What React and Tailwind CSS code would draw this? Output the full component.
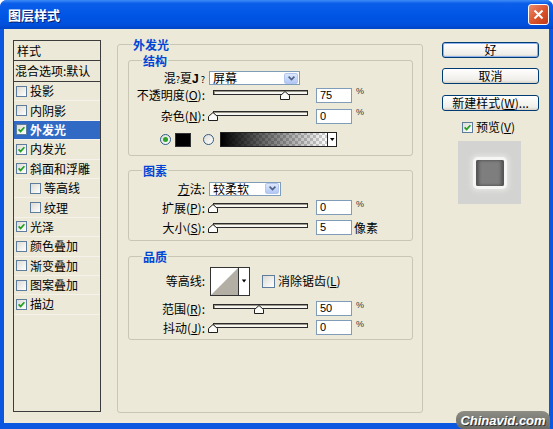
import React from 'react';

const styles = [
  { name: '投影', on: false },
  { name: '内阴影', on: false },
  { name: '外发光', on: true, sel: true },
  { name: '内发光', on: true },
  { name: '斜面和浮雕', on: true },
  { name: '等高线', on: false, sub: true },
  { name: '纹理', on: false, sub: true },
  { name: '光泽', on: true },
  { name: '颜色叠加', on: false },
  { name: '渐变叠加', on: false },
  { name: '图案叠加', on: false },
  { name: '描边', on: true },
];

const Check = ({ checked }) => (
  <span className="flex h-[11px] w-[11px] shrink-0 items-center justify-center border border-[#5e7c9c] bg-[linear-gradient(135deg,#dcdbd4,#ffffff)]">
    {checked && (
      <svg width="7" height="7" viewBox="0 0 7 7">
        <path d="M0.6 3.4 L2.6 5.4 L6.4 1.2" stroke="#21a121" strokeWidth="1.7" fill="none" />
      </svg>
    )}
  </span>
);

const Radio = ({ on }) => (
  <span className="flex h-[11px] w-[11px] shrink-0 items-center justify-center rounded-full border border-[#2f5b86] bg-[linear-gradient(135deg,#dcdbd4,#ffffff)]">
    {on && <span className="h-[5px] w-[5px] rounded-full bg-[#2aa52a]" />}
  </span>
);

const Key = ({ children }) => <span className="underline">{children}</span>;

const Label = ({ children }) => (
  <div className="w-[76px] shrink-0 whitespace-nowrap text-right leading-none">{children}</div>
);

const Slider = ({ value }) => (
  <div className="relative ml-[3px] h-[10px] w-[100px] shrink-0">
    <div className="ml-[5px] h-[5px] w-[95px] border border-[#2b2b2b] bg-[#f6f5f0] shadow-[inset_1px_1px_0_#9a978a]" />
    <svg className="absolute top-[1px]" style={{ left: value * 0.95 }} width="10" height="9" viewBox="0 0 10 9">
      <path d="M0.5 8.5 V4.5 L5 0.5 L9.5 4.5 V8.5 Z" fill="#fbfbf8" stroke="#1e1e1e" />
    </svg>
  </div>
);

const Field = ({ v }) => (
  <div className="ml-[8px] flex h-[15px] w-[36px] shrink-0 items-center border border-[#7f9db9] bg-white pl-[3px] font-['Liberation_Sans',sans-serif] text-[11px] leading-none text-black">
    {v}
  </div>
);

const Pct = () => <span className="ml-[4px] self-start font-['Liberation_Sans',sans-serif] text-[9px] leading-none text-[#333]">%</span>;

const Select = ({ text, wide }) => (
  <div className={`ml-[4px] flex h-[14px] items-center justify-between border border-[#7f9db9] bg-white pl-[3px] pr-[1px] leading-none ${wide ? 'w-[91px]' : 'w-[72px]'}`}>
    <span>{text}</span>
    <span className="flex h-[11px] w-[14px] items-center justify-center rounded-[2px] border border-[#b4c7ee] bg-[linear-gradient(#dde7fd,#b2c7f5)]">
      <svg width="7" height="5" viewBox="0 0 7 5">
        <path d="M0.6 0.6 L3.5 3.6 L6.4 0.6" stroke="#4d6185" strokeWidth="1.6" fill="none" />
      </svg>
    </span>
  </div>
);

const Legend = ({ children, inner }) => (
  <div className={`-mt-[8px] w-fit bg-[#ece9d8] px-[1px] text-[12px] font-bold leading-[15px] text-[#0046d5] ${inner ? 'ml-[13px]' : 'ml-[14px]'}`}>
    {children}
  </div>
);

const Btn = ({ children, focus }) => (
  <div
    className={`flex h-[16px] w-[97px] items-center justify-center rounded-[3px] border border-[#003c74] bg-[linear-gradient(#ffffff,#efeee9_80%,#d8d2c6)] leading-none ${focus ? 'shadow-[inset_0_0_0_1px_#8fb1ee]' : ''}`}
  >
    {children}
  </div>
);

export default function App() {
  return (
    <div className="relative flex h-[429px] w-[553px] flex-col overflow-hidden rounded-t-[7px] bg-[#0b57e0] font-['Noto_Sans_CJK_SC','Noto_Sans',sans-serif] text-[12px] text-black">
      {/* title bar */}
      <div className="flex h-[29px] shrink-0 items-center justify-between bg-[linear-gradient(#3f8cf7,#0a5ee9_12%,#0055e5_55%,#0050dc_85%,#0044c6)]">
        <span className="ml-[8px] text-[13px] font-bold leading-none text-white [text-shadow:1px_1px_0_#0a1e6a]">图层样式</span>
        <div className="mr-[4px] flex h-[21px] w-[21px] items-center justify-center rounded-[3px] border border-white bg-[linear-gradient(135deg,#ec8c6c,#d8522c_55%,#c23a18)]">
          <svg width="11" height="11" viewBox="0 0 11 11">
            <path d="M1.5 1.5 L9.5 9.5 M9.5 1.5 L1.5 9.5" stroke="#fff" strokeWidth="2" />
          </svg>
        </div>
      </div>

      {/* body */}
      <div className="mx-[4px] flex h-[394px] shrink-0 bg-[#ece9d8]">
        {/* style list */}
        <div className="ml-[9px] mt-[11px] h-[372px] w-[88px] shrink-0 border border-[#3c3c3c]">
          <div className="flex h-[20px] items-center border-b border-[#3c3c3c] pl-[3px] leading-none">样式</div>
          <div className="flex h-[21px] items-center whitespace-nowrap border-b border-[#3c3c3c] pl-[1px] leading-none">混合选项:默认</div>
          {styles.map((s) => (
            <div
              key={s.name}
              className={`flex h-[19.4px] items-center gap-[3px] border-b border-[#f4f2ea] leading-none ${s.sub ? 'pl-[16px]' : 'pl-[2px]'} ${s.sel ? 'bg-[#316ac5] font-bold text-white' : ''}`}
            >
              <Check checked={s.on} />
              <span>{s.name}</span>
            </div>
          ))}
        </div>

        {/* settings */}
        <div className="ml-[16px] mt-[15px] h-[369px] w-[306px] shrink-0 rounded-[3px] border border-[#c9c6b6]">
          <Legend>外发光</Legend>

          <div className="ml-[10px] mt-[8px] w-[285px] rounded-[3px] border border-[#c9c6b6] pb-[8px]">
            <Legend inner>结构</Legend>
            <div className="mt-[3px] flex h-[14px] items-center">
              <Label>
                混<span className="text-[9px]">?</span>夏<span className="font-['Liberation_Sans',sans-serif] font-bold">J</span>
                <span className="text-[9px]"> ?</span>
              </Label>
              <Select text="屏幕" wide />
            </div>
            <div className="mt-[2px] flex h-[16px] items-center">
              <Label>不透明度(<Key>O</Key>):</Label>
              <Slider value={76} />
              <Field v="75" />
              <Pct />
            </div>
            <div className="mt-[5px] flex h-[16px] items-center">
              <Label>杂色(<Key>N</Key>):</Label>
              <Slider value={0} />
              <Field v="0" />
              <Pct />
            </div>
            <div className="mt-[8px] flex h-[15px] items-center pl-[31px]">
              <Radio on />
              <span className="ml-[4px] h-[14px] w-[16px] border border-[#333] bg-black" />
              <span className="ml-[12px]">
                <Radio />
              </span>
              <svg className="ml-[6px]" width="117" height="15" viewBox="0 0 117 15">
                <defs>
                  <pattern id="chk" width="6" height="6" patternUnits="userSpaceOnUse">
                    <rect width="6" height="6" fill="#fff" />
                    <rect width="3" height="3" fill="#cfcfcf" />
                    <rect x="3" y="3" width="3" height="3" fill="#cfcfcf" />
                  </pattern>
                  <linearGradient id="fade">
                    <stop offset="0" stopColor="#000" />
                    <stop offset="1" stopColor="#000" stopOpacity="0" />
                  </linearGradient>
                </defs>
                <rect x="0.5" y="0.5" width="107" height="14" fill="url(#chk)" stroke="#222" />
                <rect x="1" y="1" width="106" height="13" fill="url(#fade)" />
                <rect x="107.5" y="0.5" width="9" height="14" fill="#fff" stroke="#222" />
                <path d="M110 6 h4.5 l-2.25 3 z" fill="#000" />
              </svg>
            </div>
          </div>

          <div className="ml-[10px] mt-[14px] w-[285px] rounded-[3px] border border-[#c9c6b6] pb-[5px]">
            <Legend inner>图素</Legend>
            <div className="mt-[4px] flex h-[13px] items-center">
              <Label>
                <Key>方</Key>法:
              </Label>
              <Select text="较柔软" />
            </div>
            <div className="mt-[5px] flex h-[15px] items-center">
              <Label>扩展(<Key>P</Key>):</Label>
              <Slider value={0} />
              <Field v="0" />
              <Pct />
            </div>
            <div className="mt-[5px] flex h-[15px] items-center">
              <Label>大小(<Key>S</Key>):</Label>
              <Slider value={0} />
              <Field v="5" />
              <span className="ml-[2px] leading-none">像素</span>
            </div>
          </div>

          <div className="ml-[10px] mt-[15px] w-[285px] rounded-[3px] border border-[#c9c6b6] pb-[4px]">
            <Legend inner>品质</Legend>
            <div className="mt-[3px] flex h-[28px] items-center">
              <Label>等高线:</Label>
              <svg className="ml-[5px]" width="40" height="29" viewBox="0 0 40 29">
                <rect x="0.5" y="0.5" width="39" height="28" fill="#fff" stroke="#333" />
                <path d="M1 28 L28 1 V28 Z" fill="#b3afa4" />
                <line x1="28.5" y1="0" x2="28.5" y2="29" stroke="#333" />
                <path d="M31.8 12.5 h4.5 l-2.25 3 z" fill="#000" />
              </svg>
              <span className="ml-[12px] h-[13px] w-[13px] border border-[#5e7c9c] bg-[linear-gradient(135deg,#dcdbd4,#ffffff)]" />
              <span className="ml-[3px] leading-none">
                消除锯齿(<Key>L</Key>)
              </span>
            </div>
            <div className="mt-[6px] flex h-[15px] items-center">
              <Label>范围(<Key>R</Key>):</Label>
              <Slider value={48} />
              <Field v="50" />
              <Pct />
            </div>
            <div className="mt-[4px] flex h-[15px] items-center">
              <Label>抖动(<Key>J</Key>):</Label>
              <Slider value={0} />
              <Field v="0" />
              <Pct />
            </div>
          </div>
        </div>

        {/* buttons + preview */}
        <div className="ml-[19px] mt-[13px] flex w-[97px] shrink-0 flex-col">
          <Btn focus>好</Btn>
          <div className="mt-[10px]">
            <Btn>取消</Btn>
          </div>
          <div className="mt-[11px]">
            <Btn>
              新建样式(<Key>W</Key>)...
            </Btn>
          </div>
          <div className="ml-[20px] mt-[10px] flex items-center gap-[3px] leading-none">
            <Check checked />
            <span>
              预览(<Key>V</Key>)
            </span>
          </div>
          <div className="ml-[16px] mt-[8px] flex h-[63px] w-[63px] items-center justify-center bg-[#d3d3d1]">
            <div className="h-[26px] w-[28px] rounded-[2px] bg-[#7e7e7e] shadow-[0_0_0_3px_#f6f6f4,0_0_5px_5px_#e6e6e4,inset_3px_0_3px_#555,inset_-3px_0_3px_#555]" />
          </div>
        </div>
      </div>

      {/* watermark */}
      <div className="absolute bottom-0 right-[3px] flex h-[18px] w-[94px] items-center justify-center rounded-t-[8px] rounded-bl-[8px] bg-[linear-gradient(#8d8d86,#6a6a64)]">
        <span className="font-['Liberation_Sans',sans-serif] text-[13px] font-bold italic leading-none text-white [text-shadow:1px_1px_0_#333]">
          Chinavid.com
        </span>
      </div>
    </div>
  );
}
